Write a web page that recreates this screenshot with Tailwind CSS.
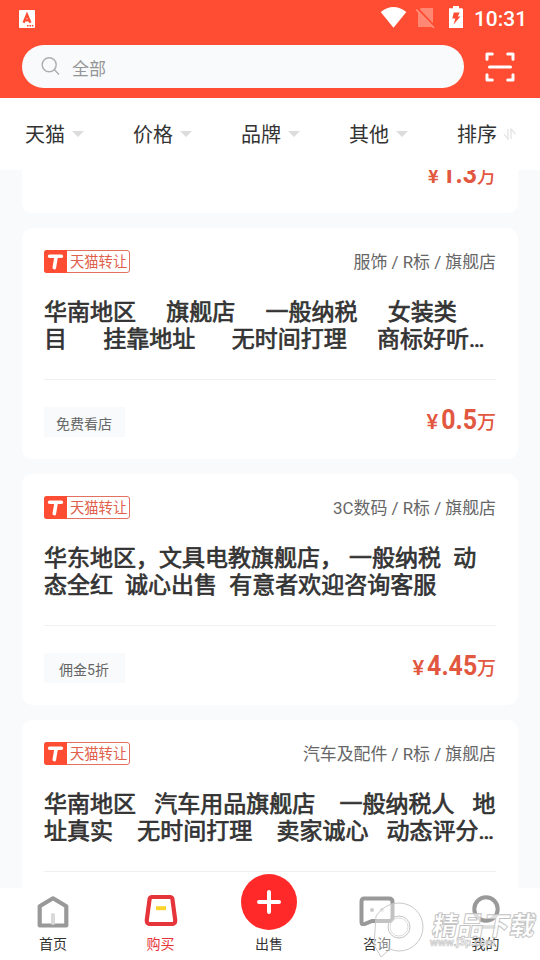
<!DOCTYPE html>
<html lang="zh-CN">
<head>
<meta charset="utf-8">
<title>购买</title>
<script src="https://cdn.jsdelivr.net/npm/@tailwindcss/browser@4"></script>
</head>
<body class="w-[540px] h-[960px] overflow-hidden bg-white font-[Roboto,'Noto_Sans_CJK_SC',sans-serif] text-[#333]">
<svg class="hidden">
  <symbol id="caret" viewBox="0 0 12 6"><path d="M0 0H12L6 6Z" fill="#dcdcdc"/></symbol>
  <symbol id="tmall" viewBox="0 0 23 23"><path d="M3 0H23V23H3Q0 23 0 20V3Q0 0 3 0Z" fill="#fe4d33"/><path d="M5.6 6.3H17.4M12.2 6.5L10.3 17.6" fill="none" stroke="#fff" stroke-width="3.6" stroke-linecap="round" stroke-linejoin="round"/></symbol>
</svg>
<div class="relative flex flex-col h-full">
  <header class="h-[98px] shrink-0 bg-[#fe4d33] flex flex-col">
    <div class="h-[37px] flex items-center justify-between pl-[19px] pr-[14px]">
      <svg class="w-4 h-[18px]" viewBox="0 0 16 18"><rect width="16" height="18" rx="1" fill="#fff"/><path d="M4.6 12.7L8 4.5L11.4 12.7M6 10.4H10" fill="none" stroke="#fe4d33" stroke-width="2.3"/><path d="M8 15.7H15" stroke="#fe4d33" stroke-width="1.4" stroke-dasharray="1.6 .8"/></svg>
      <svg class="w-[146px] h-[37px]" viewBox="380 0 146 37">
        <path d="M380.7 12.1Q393.5 2 406.3 12.1L393.5 27.8Z" fill="#fff"/>
        <path d="M421 8H433V27H418V11Z" fill="#ff8875"/><path d="M417 8.5L435 27.5" stroke="#fe4d33" stroke-width="3.2"/><path d="M416.2 9.5L434 27.8" stroke="#ff8f7d" stroke-width="1.7"/>
        <path d="M453 6H459V8.2H461.6Q463 8.2 463 9.6V28H449V8.2H453Z" fill="#fff"/><path d="M453.8 12.5H459.7L457.8 16.5H460.4L453.6 24.6L455.3 18.5H452.3Z" fill="#fe4d33"/>
        <text x="474" y="26" font-family="Roboto" font-size="21" font-weight="500" fill="#fff" textLength="53" lengthAdjust="spacingAndGlyphs" class="tabular-nums">10:31</text>
      </svg>
    </div>
    <div class="flex items-center pl-[22px] pr-[25px] mt-2 justify-between">
      <div class="w-[442px] h-[43px] rounded-full bg-[#f8fafc] flex items-center pl-[19px] gap-[12px]">
        <svg class="w-[19px] h-[19px]" viewBox="0 0 19 19" fill="none" stroke="#adadad" stroke-width="1.4"><circle cx="8.2" cy="7.7" r="7"/><path d="M13.2 12.5L18 17.4"/></svg>
        <span class="text-[17px] leading-[24px] text-[#959595] pt-[5px]">全部</span>
      </div>
      <svg class="w-[30px] h-[30px]" viewBox="0 0 30 30" fill="none" stroke="#fff" stroke-width="3" stroke-linejoin="round" stroke-linecap="round"><path d="M2 7.3V2H7.3M22.7 2H28V7.3M28 22.7V28H22.7M7.3 28H2V22.7M4.5 15H25.5"/></svg>
    </div>
  </header>

  <nav class="h-[72px] shrink-0 bg-white flex pl-[25px] text-xl leading-[30px]">
    <div class="w-[108px] shrink-0 flex items-center gap-[7px]"><span class="pt-[2px]">天猫</span><svg class="w-3 h-1.5"><use href="#caret"/></svg></div>
    <div class="w-[108px] shrink-0 flex items-center gap-[7px]"><span class="pt-[2px]">价格</span><svg class="w-3 h-1.5"><use href="#caret"/></svg></div>
    <div class="w-[108px] shrink-0 flex items-center gap-[7px]"><span class="pt-[2px]">品牌</span><svg class="w-3 h-1.5"><use href="#caret"/></svg></div>
    <div class="w-[108px] shrink-0 flex items-center gap-[7px]"><span class="pt-[2px]">其他</span><svg class="w-3 h-1.5"><use href="#caret"/></svg></div>
    <div class="flex items-center gap-[7px]"><span class="pt-[2px]">排序</span><svg class="w-3 h-3" viewBox="0 0 12 12" fill="none" stroke="#e2e2e2" stroke-width="1.2"><path d="M0 6L4 11V1M7 11V1L11.5 6"/></svg></div>
  </nav>

  <main class="h-[718px] shrink-0 overflow-hidden bg-[#f8fafc] px-[22px] flex flex-col justify-start">
    <div class="flex flex-col gap-[15px] -mt-[188px]">
      <article class="h-[231px] shrink-0 rounded-[10px] bg-white px-[22px] flex flex-col justify-end">
        <div class="h-[79px] flex items-center justify-end text-[#e2573f]">
          <span class="text-xl font-medium leading-none pt-1 mr-[3px] scale-x-110">¥</span><span class="text-[28px] font-bold leading-none w-[35px] flex justify-center"><span class="scale-x-[.89]">1.3</span></span><span class="text-[19px] font-medium leading-none pt-[5px]">万</span>
        </div>
      </article>

      <article class="h-[231px] shrink-0 rounded-[10px] bg-white px-[22px]">
        <div class="flex items-center justify-between pt-[22px] h-[45px]">
          <div class="flex w-[86px] h-[23px] border border-[#e4705f] rounded-[3px]"><svg class="w-[23px] h-[23px] -m-px shrink-0"><use href="#tmall"/></svg><span class="text-[14.3px] leading-[23px] text-[#e0604c] pl-[4px] whitespace-nowrap">天猫转让</span></div>
          <div class="text-[16.9px] leading-6 pt-px text-[#666] whitespace-nowrap">服饰 / R标 / 旗舰店</div>
        </div>
        <h2 class="mt-[26px] h-[80px] text-[23px] leading-[27px] whitespace-pre font-normal [-webkit-text-stroke:0.7px_#333] [word-spacing:0.35px]">华南地区     旗舰店     一般纳税     女装类
目      挂靠地址      无时间打理     商标好听…</h2>
        <div class="border-t border-[#eef0f1] h-[80px] flex items-center justify-between">
          <span class="w-[81px] h-[30px] mt-[4px] bg-[#f8fafb] text-sm leading-[34px] text-[#666] text-center pr-px">免费看店</span>
          <div class="flex items-center text-[#e2573f]"><span class="text-xl font-medium leading-none pt-1 mr-[4px] scale-x-110">¥</span><span class="text-[28px] font-bold leading-none w-[35px] flex justify-center"><span class="scale-x-[.89]">0.5</span></span><span class="text-[19px] font-medium leading-none pt-[5px]">万</span></div>
        </div>
      </article>

      <article class="h-[231px] shrink-0 rounded-[10px] bg-white px-[22px]">
        <div class="flex items-center justify-between pt-[22px] h-[45px]">
          <div class="flex w-[86px] h-[23px] border border-[#e4705f] rounded-[3px]"><svg class="w-[23px] h-[23px] -m-px shrink-0"><use href="#tmall"/></svg><span class="text-[14.3px] leading-[23px] text-[#e0604c] pl-[4px] whitespace-nowrap">天猫转让</span></div>
          <div class="text-[16.9px] leading-6 pt-px text-[#666] whitespace-nowrap">3C数码 / R标 / 旗舰店</div>
        </div>
        <h2 class="mt-[26px] h-[80px] text-[23px] leading-[27px] whitespace-pre font-normal [-webkit-text-stroke:0.7px_#333] [word-spacing:0.35px]">华东地区，文具电教旗舰店， 一般纳税  动
态全红  诚心出售  有意者欢迎咨询客服</h2>
        <div class="border-t border-[#eef0f1] h-[80px] flex items-center justify-between">
          <span class="w-[81px] h-[30px] mt-[4px] bg-[#f8fafb] text-sm leading-[34px] text-[#666] text-center pr-px">佣金5折</span>
          <div class="flex items-center text-[#e2573f]"><span class="text-xl font-medium leading-none pt-1 mr-[4px] scale-x-110">¥</span><span class="text-[28px] font-bold leading-none w-[49px] flex justify-center"><span class="scale-x-[.89]">4.45</span></span><span class="text-[19px] font-medium leading-none pt-[5px]">万</span></div>
        </div>
      </article>

      <article class="h-[231px] shrink-0 rounded-[10px] bg-white px-[22px]">
        <div class="flex items-center justify-between pt-[22px] h-[45px]">
          <div class="flex w-[86px] h-[23px] border border-[#e4705f] rounded-[3px]"><svg class="w-[23px] h-[23px] -m-px shrink-0"><use href="#tmall"/></svg><span class="text-[14.3px] leading-[23px] text-[#e0604c] pl-[4px] whitespace-nowrap">天猫转让</span></div>
          <div class="text-[16.9px] leading-6 pt-px text-[#666] whitespace-nowrap">汽车及配件 / R标 / 旗舰店</div>
        </div>
        <h2 class="mt-[26px] h-[80px] text-[23px] leading-[27px] whitespace-pre font-normal [-webkit-text-stroke:0.7px_#333] [word-spacing:0.35px]">华南地区   汽车用品旗舰店    一般纳税人   地
址真实    无时间打理    卖家诚心   动态评分…</h2>
        <div class="border-t border-[#eef0f1] h-[80px]"></div>
      </article>
    </div>
  </main>

  <footer class="h-[72px] shrink-0 bg-white flex text-sm leading-5 relative">
    <div class="w-[106px] flex flex-col items-center justify-end pb-[6px] gap-[6px]">
      <svg class="w-8 h-8 shrink-0" viewBox="0 0 32 32" fill="none" stroke-linejoin="round"><path d="M2.7 10.2L16 2.3L29.3 10.2V29.5H2.7Z" stroke="#999" stroke-width="4.2"/><path d="M16 19V27" stroke="#d9d9d9" stroke-width="4" stroke-linecap="round"/></svg>
      <span>首页</span>
    </div>
    <div class="w-[109px] flex flex-col items-center justify-end pb-[6px] gap-[8px] text-[#e5333a]">
      <svg class="w-[34px] h-8 shrink-0" viewBox="0 0 34 32" fill="none" stroke-linejoin="round"><path d="M8 3H26Q28 3 28.4 5L31.2 26Q31.5 30 28 30H6Q2.5 30 2.8 26L5.6 5Q6 3 8 3Z" stroke="#e5353b" stroke-width="4.2"/><path d="M12 14.2H22" stroke="#fbd52b" stroke-width="4"/></svg>
      <span>购买</span>
    </div>
    <div class="w-[108px] flex flex-col items-center justify-end pb-[6px] gap-[4px]">
      <svg class="w-14 h-14 shrink-0" viewBox="0 0 56 56"><circle cx="28" cy="28" r="28" fill="#ff2929"/><path d="M18 28H38M28 18V38" stroke="#fff" stroke-width="4" stroke-linecap="round"/></svg>
      <span>出售</span>
    </div>
    <div class="w-[108px] flex flex-col items-center justify-end pb-[6px] gap-[8px]">
      <svg class="w-9 h-8 shrink-0" viewBox="0 0 36 32" fill="none"><path d="M5 4.5H30Q33.5 4.5 33.5 8V24Q33.5 27 30 27H13L5 30.3Q2.5 31 2.5 28V8Q2.5 4.5 5 4.5Z" stroke="#999" stroke-width="4"/><circle cx="13" cy="16" r="2" fill="#ccc"/><circle cx="23" cy="16" r="2" fill="#ddd"/></svg>
      <span>咨询</span>
    </div>
    <div class="w-[109px] flex flex-col items-center justify-end pb-[6px] gap-[5px]">
      <svg class="w-[30px] h-[35px] shrink-0" viewBox="0 0 30 35" fill="none"><circle cx="15" cy="15" r="11.7" stroke="#999" stroke-width="4"/><path d="M6 33H24" stroke="#ddd" stroke-width="3.5" stroke-linecap="round"/></svg>
      <span>我的</span>
    </div>
    <svg class="absolute left-[370px] top-[10px] w-[170px] h-[62px]" viewBox="370 898 170 62">
      <path d="M376 916Q385 903 399 903A24 24 0 0 1 399 951Q394 951 390 949L381 957L374 945Z" fill="#fff" fill-opacity=".4" stroke="#c9c9c9"/>
      <circle cx="399" cy="927" r="11" fill="none" stroke="#c4c4c4"/><circle cx="399" cy="927" r="9" fill="#fff" fill-opacity=".5" stroke="#ddd"/>
      <g fill="#fff" fill-opacity=".7" stroke="#c2c2c2" stroke-width=".9">
        <text transform="translate(431 935) skewX(-10)" font-family="'Noto Sans CJK SC',sans-serif" font-weight="900" font-size="26" textLength="103" lengthAdjust="spacingAndGlyphs">精品下载</text>
        <text x="430" y="946" font-family="'Liberation Sans',sans-serif" font-weight="700" font-size="10" textLength="65" stroke-width=".6">www.j3p.com</text>
      </g>
    </svg>
  </footer>
</div>
</body>
</html>
